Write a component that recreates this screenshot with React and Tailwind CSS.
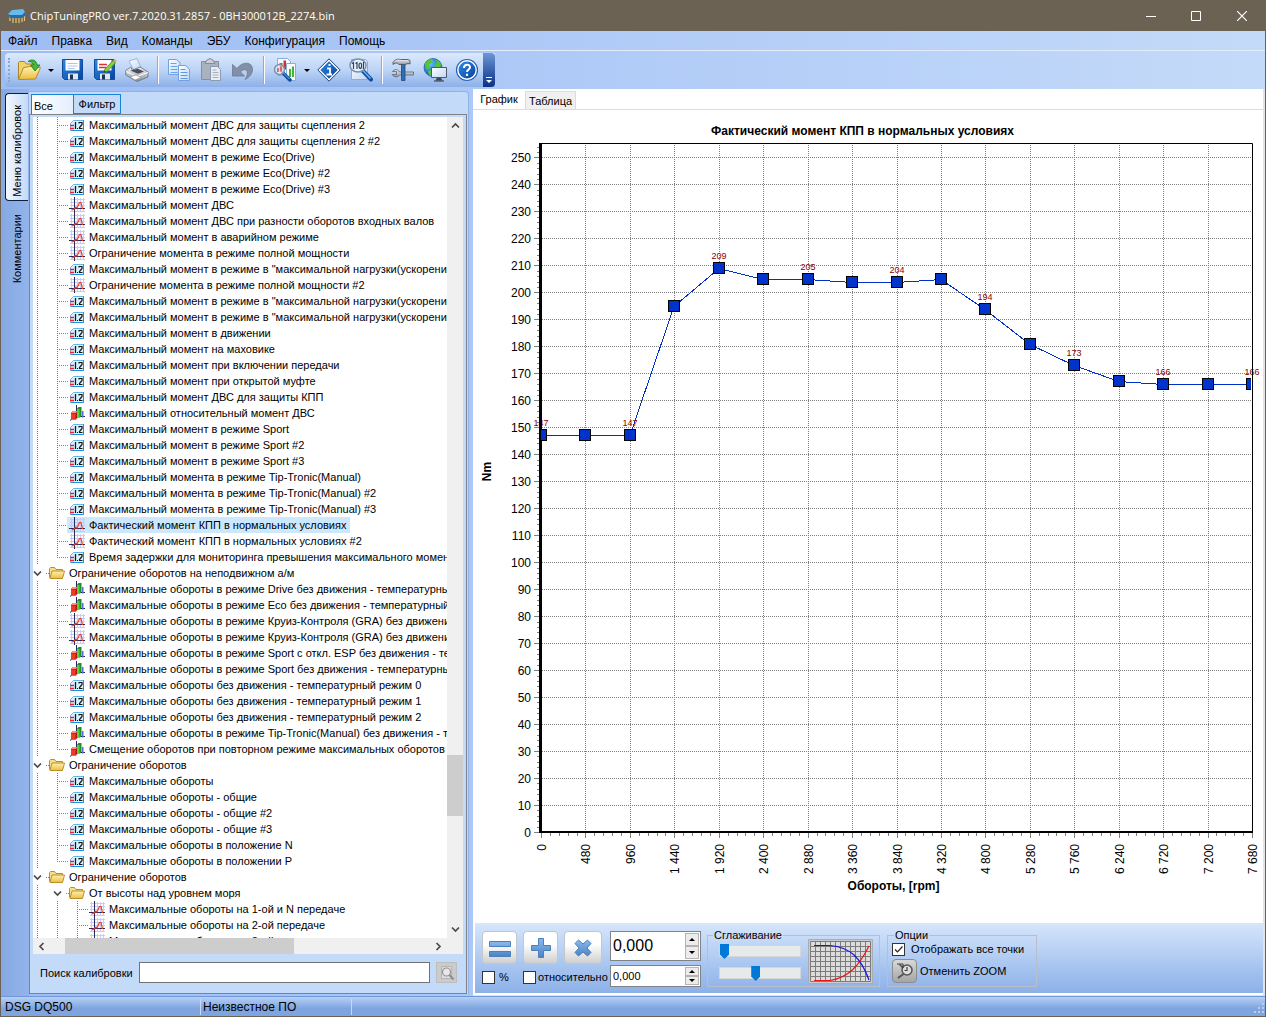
import React, { useLayoutEffect, useRef, useState } from "react";

/* ---------- toolbar icons ---------- */
const Svg = ({ children, size = 24 }) => (
  <svg width={size} height={size} viewBox={`0 0 ${size} ${size}`} fill="none" aria-hidden="true">
    {children}
  </svg>
);

const Defs = () => (
  <svg width="0" height="0" className="absolute" aria-hidden="true">
    <defs>
      <linearGradient id="gold" x1="0" y1="0" x2="0" y2="1">
        <stop offset="0" stopColor="#fdf3b4" />
        <stop offset="1" stopColor="#eebd3c" />
      </linearGradient>
      <linearGradient id="blue" x1="0" y1="0" x2="1" y2="1">
        <stop offset="0" stopColor="#2e8ae6" />
        <stop offset="1" stopColor="#06429a" />
      </linearGradient>
      <linearGradient id="sheet" x1="0" y1="0" x2="1" y2="1">
        <stop offset="0" stopColor="#ffffff" />
        <stop offset="1" stopColor="#bcd7f8" />
      </linearGradient>
      <linearGradient id="steel" x1="0" y1="0" x2="0" y2="1">
        <stop offset="0" stopColor="#f4f6f8" />
        <stop offset="1" stopColor="#8a929d" />
      </linearGradient>
      <linearGradient id="glyph" x1="0" y1="0" x2="0" y2="1">
        <stop offset="0" stopColor="#8cb9ec" />
        <stop offset="1" stopColor="#4a83c4" />
      </linearGradient>
      <radialGradient id="globe" cx="0.35" cy="0.3" r="0.8">
        <stop offset="0" stopColor="#5fc3f5" />
        <stop offset="1" stopColor="#0a4aa5" />
      </radialGradient>
    </defs>
  </svg>
);

const OpenIcon = () => (
  <Svg>
    <path d="M1.5 21.5V4.500l1-1h5l2 2.500h7v4" fill="#f3d368" stroke="#a8832a" />
    <path d="M1.500 21.500 6.500 9.500l7-1 10 1-5 11.500z" fill="url(#gold)" stroke="#b08a2c" />
    <path d="M11 3.500C15 .5 19.500 2 20 7h3l-5 6-4.500-6H16.500C16 4.500 14 3.500 11 3.500z" fill="#45b83c" stroke="#157a1c" strokeWidth=".8" />
  </Svg>
);
const SaveBody = () => (
  <>
    <path d="M1.500 1.500h20v20h-18l-2-2z" fill="url(#blue)" stroke="#0b4ca0" />
    <path d="M4.500 2h14v10.500h-14z" fill="#fff" />
    <path d="M7 15.500h10v6H7z" fill="#dfe7f0" />
    <path d="M9 16.500h3v5H9z" fill="#17345f" />
  </>
);
const SaveIcon = () => (
  <Svg>
    <SaveBody />
    <path d="M6.500 5.500h10M6.500 8h10M6.500 10.500h7" stroke="#a9c8ef" />
  </Svg>
);
const SaveAsIcon = () => (
  <Svg>
    <SaveBody />
    <path d="M6 6.500h8M6 9.500h7" stroke="#d8323c" strokeWidth="1.500" />
    <path d="M11 14.500 12 11 20 2.500l2.500 2.500-8.500 8.500z" fill="#8ccf3d" stroke="#3f8420" strokeWidth=".8" />
    <path d="m20 2.500 1.500-1.800 2.300 2.300-1.300 2z" fill="#f3a53d" />
    <path d="m11 14.500.5-2 1.500 1.500z" fill="#333" />
  </Svg>
);
const PrintIcon = () => (
  <Svg>
    <path d="M4 3 12 .5l4 9-7 3z" fill="url(#sheet)" stroke="#8aa9d6" strokeWidth=".8" />
    <path d="m.8 12.500 5-3.500 1.500 3L15 9l8 5v5l-11 4.500L.8 17z" fill="url(#steel)" stroke="#6f757e" strokeWidth=".9" />
    <path d="m5.500 12.500 7.500 3.300 6-2.300-6-2.800z" fill="#4a4f58" />
    <path d="m1 13.500 11 5 11-4" stroke="#fff" />
    <path d="m5 19 5 3 6-2.500-5-2.500z" fill="#fff" stroke="#8c8c8c" strokeWidth=".6" />
  </Svg>
);
const CopyIcon = () => (
  <Svg>
    <path d="M1.500 1.500h8l3.500 3v12H1.500z" fill="url(#sheet)" stroke="#6fa2df" />
    <path d="M3.500 5.500h6M3.500 8.500h7M3.500 11.500h7M3.500 14.500h7" stroke="#6ca3e6" />
    <path d="M11.500 7.500h7l4 3.500v11.500h-11z" fill="url(#sheet)" stroke="#6fa2df" />
    <path d="M13.500 11.500h5M13.500 14.500h7M13.500 17.500h7M13.500 20.500h7" stroke="#5c97e2" />
  </Svg>
);
const PasteIcon = () => (
  <Svg>
    <path d="M2.500 3.500h17v18h-17z" fill="#a9b3c0" stroke="#8490a0" />
    <path d="M6 5.500 8 2l3-1.500L14 2l2 3.500z" fill="#c9ced6" stroke="#828d9b" />
    <path d="M11.500 8.500h7l3 3v11h-10z" fill="#e8edf3" stroke="#8d9aab" />
    <path d="M13.500 12h4M13.500 14.500h6M13.500 17h6M13.500 19.500h6" stroke="#a5b1c2" />
  </Svg>
);
const UndoIcon = () => (
  <Svg>
    <path d="M1.500 6.500v11.500h12L9.500 14C12 10.500 16.500 11 16.500 15c0 3-1.500 5-2.500 6.500 4-2 7.500-5.500 7.500-10C21.500 3.500 11.500 3 6 10.500z" fill="#8190a6" stroke="#6b7a90" strokeWidth=".8" />
  </Svg>
);
const ChartIcon = () => (
  <Svg>
    <path d="M4.500.5h10l3 3v14h-13z" fill="#f7fbff" stroke="#86aede" />
    <path d="M6.500 5h3v9h-3z" fill="#ef4a2d" />
    <path d="M10.500 2.500h2.500v9h-2.500z" fill="#d63220" />
    <path d="M13.500 5.500h9v17h-9z" fill="#f7fbff" stroke="#86aede" />
    <path d="M16 11h2v8h-2zM19 8.500h2V19h-2z" fill="#41b436" />
    <path d="m10 15 7 7" stroke="#0c4ea1" strokeWidth="3.500" strokeLinecap="round" />
    <path d="m10.500 15 6 6" stroke="#6fb3f2" />
    <circle cx="6.500" cy="11.500" r="5" fill="#dcecfb" fillOpacity=".7" stroke="#7b8ea8" strokeWidth="1.400" />
    <path d="M5 10v4M8 8.500v5" stroke="#c6505a" strokeWidth="1.500" />
  </Svg>
);
const InfoIcon = () => (
  <Svg>
    <path d="M12 .8 23.200 12 12 23.200.8 12z" fill="#fff" stroke="#143f78" />
    <path d="M12 3.300 20.700 12 12 20.700 3.300 12z" fill="url(#blue)" />
    <path d="M10 10.500h3v5.500M9.500 16.500h5.500M11.500 7h2" stroke="#fff" strokeWidth="1.800" />
  </Svg>
);
const BinIcon = () => (
  <Svg>
    <path d="M2.500 1.500h14l2 2v18h-16z" fill="url(#sheet)" stroke="#86aede" />
    <path d="m13 12 9 9.500" stroke="#0c4ea1" strokeWidth="4" strokeLinecap="round" />
    <path d="m13.500 12 8 8.500" stroke="#6fb3f2" strokeWidth="1.500" />
    <ellipse cx="9" cy="7.500" rx="8" ry="6.500" fill="#e8f2fc" fillOpacity=".9" stroke="#7b8ea8" strokeWidth="1.400" />
    <path d="M3 5.500 4.500 4.500V11M6.500 5.500 8 4.500V11M14.500 4v7" stroke="#2d4468" strokeWidth="1.200" />
    <ellipse cx="11.300" cy="7.700" rx="1.300" ry="2.700" stroke="#2d4468" strokeWidth="1.200" />
  </Svg>
);
const ToolsIcon = () => (
  <Svg>
    <path d="M1 16.500c2 3 6 3 7.500.5h14v-3H8.500C7 11 3 11 1.500 13.500h4v3z" fill="url(#steel)" stroke="#5b646f" strokeWidth=".8" />
    <path d="M10.500 6H14v16.500h-3.500z" fill="#2e70b8" stroke="#1d477c" strokeWidth=".8" />
    <path d="M2 4.500C4 1 7 1 9.500 1.500h7.500l2 1V6l-2-.5-3 1H8C6.500 4.500 4.500 4.500 2 6.500z" fill="url(#steel)" stroke="#4f5761" strokeWidth=".9" />
  </Svg>
);
const NetIcon = () => (
  <Svg>
    <circle cx="10" cy="9.500" r="9" fill="url(#globe)" stroke="#0b57a8" strokeWidth=".7" />
    <path d="M2 6C4 2 8 .8 10 1l-1 3.500-3 2 1 3-3 2.500zM13 2c3 .5 5 3 5.500 6l-4 2-3-2.500 2-2zM5 13l4-1 2 3-2 3.500C7 18 5 16 5 13z" fill="#57c433" />
    <path d="M8.500 9.500h15v10h-15z" fill="url(#sheet)" stroke="#4d5a69" />
    <path d="M14 20h4l1.500 2.500h-7z" fill="#3d4651" />
    <path d="M11 23h10" stroke="#2f3740" />
  </Svg>
);
const HelpIcon = () => (
  <Svg>
    <circle cx="12" cy="12" r="10.500" fill="#fff" stroke="#2563b5" strokeWidth="1.200" />
    <circle cx="12" cy="12" r="8.500" fill="url(#blue)" />
    <path d="M9 10c0-4.300 6-4.300 6-.8 0 2.300-3 2.200-3 4.800" stroke="#fff" strokeWidth="2" />
    <path d="M10.900 15.700h2.200v2.200h-2.200z" fill="#fff" />
  </Svg>
);

/* ---------- tree icons ---------- */
const NumIcon = () => (
  <Svg size={16}>
    <path d="M4.500 3.500h10v10h-13v-7z" fill="#d9f2ff" stroke="#62b6ee" />
    <path d="M14.500 3v10.500H2" stroke="#1f8fe0" />
    <path d="M1 8.500h4M1 11.500h4" stroke="#f0202c" strokeWidth="1.400" />
    <path d="M6.500 5v7" stroke="#15161c" strokeWidth="1.300" />
    <path d="M8 11h1v1H8z" fill="#15161c" />
    <path d="M10 6.500v-1h3v2l-2.500 3v1H13.500" stroke="#15161c" strokeWidth="1.200" />
  </Svg>
);
const CurveIcon = () => (
  <Svg size={16}>
    <path d="M2.500 1v14M8.500 1v14M11.500 1v14M14.500 1v14M1 2.500h15M1 5.500h15M1 8.500h15M1 14.500h15" stroke="#c9caf8" />
    <path d="M5.500 0v16M0 11.500h16" stroke="#2a2a62" />
    <path d="m3 13 2-1 2-2 1 1 2.500-5.500h1.500L13.500 12" stroke="#f04024" strokeWidth="1.200" />
  </Svg>
);
const BarIcon = () => (
  <Svg size={16}>
    <path d="M7.500 0v12M1 15.500l5-4M7 11.500h9" stroke="#2a2a62" />
    <path d="m2 8 2-2h5v6l-2 2.500H2z" fill="#b41712" />
    <path d="M2 8.500h4.500v6H2z" fill="#ee3b28" />
    <path d="m2.300 8 1.700-2h4.500L7 8z" fill="#ff8d74" />
    <path d="M8 3.500 9.500 2h3v9L11 12.500H8z" fill="#1d8f23" />
    <path d="M8 4h2.500v8.500H8z" fill="#4bd640" />
    <path d="M13 6h1.500v6.500H13z" fill="#5b66d9" />
  </Svg>
);
const FolderIcon = () => (
  <Svg size={16}>
    <path d="M.5 12.500v-9l1-1h4l1.500 2h6.500v2" fill="#f8e08a" stroke="#b98f2d" />
    <path d="m1 13.500 2-7.500h12.500l-2 7.500z" fill="url(#gold)" stroke="#b98f2d" />
  </Svg>
);
const icons = { n: NumIcon, c: CurveIcon, b: BarIcon };

/* [depth, kind, label, last-in-branch] ; kind f = folder */
const U = 'Максимальный момент в режиме в "максимальной нагрузки(ускорения';
const rows = [
  [2, "n", "Максимальный момент ДВС для защиты сцепления 2"],
  [2, "n", "Максимальный момент ДВС для защиты сцепления 2 #2"],
  [2, "n", "Максимальный момент в режиме Eco(Drive)"],
  [2, "n", "Максимальный момент в режиме Eco(Drive) #2"],
  [2, "n", "Максимальный момент в режиме Eco(Drive) #3"],
  [2, "c", "Максимальный момент ДВС"],
  [2, "c", "Максимальный момент ДВС при разности оборотов входных валов"],
  [2, "c", "Максимальный момент в аварийном режиме"],
  [2, "c", "Ограничение момента в режиме полной мощности"],
  [2, "n", U],
  [2, "c", "Ограничение момента в режиме полной мощности #2"],
  [2, "n", U],
  [2, "n", U],
  [2, "n", "Максимальный момент в движении"],
  [2, "n", "Максимальный момент на маховике"],
  [2, "n", "Максимальный момент при включении передачи"],
  [2, "n", "Максимальный момент при открытой муфте"],
  [2, "n", "Максимальный момент ДВС для защиты КПП"],
  [2, "b", "Максимальный относительный момент ДВС"],
  [2, "n", "Максимальный момент в режиме Sport"],
  [2, "n", "Максимальный момент в режиме Sport #2"],
  [2, "n", "Максимальный момент в режиме Sport #3"],
  [2, "n", "Максимальный момента в режиме Tip-Tronic(Manual)"],
  [2, "n", "Максимальный момента в режиме Tip-Tronic(Manual) #2"],
  [2, "n", "Максимальный момента в режиме Tip-Tronic(Manual) #3"],
  [2, "c", "Фактический момент КПП в нормальных условиях"],
  [2, "c", "Фактический момент КПП в нормальных условиях #2"],
  [2, "n", "Время задержки для мониторинга превышения максимального момент", true],
  [1, "f", "Ограничение оборотов на неподвижном а/м"],
  [2, "b", "Максимальные обороты в режиме Drive без движения - температурны"],
  [2, "b", "Максимальные обороты в режиме Eco без движения - температурный"],
  [2, "c", "Максимальные обороты в режиме Круиз-Контроля (GRA) без движени"],
  [2, "c", "Максимальные обороты в режиме Круиз-Контроля (GRA) без движени"],
  [2, "b", "Максимальные обороты в режиме Sport с откл. ESP без движения - те"],
  [2, "b", "Максимальные обороты в режиме Sport без движения - температурны"],
  [2, "n", "Максимальные обороты без движения - температурный режим 0"],
  [2, "n", "Максимальные обороты без движения - температурный режим 1"],
  [2, "n", "Максимальные обороты без движения - температурный режим 2"],
  [2, "b", "Максимальные обороты в режиме Tip-Tronic(Manual) без движения - те"],
  [2, "b", "Смещение оборотов при повторном режиме максимальных оборотов б", true],
  [1, "f", "Ограничение оборотов"],
  [2, "n", "Максимальные обороты"],
  [2, "n", "Максимальные обороты - общие"],
  [2, "n", "Максимальные обороты - общие #2"],
  [2, "n", "Максимальные обороты - общие #3"],
  [2, "n", "Максимальные обороты в положение N"],
  [2, "n", "Максимальные обороты в положении P", true],
  [1, "f", "Ограничение оборотов"],
  [2, "f", "От высоты над уровнем моря"],
  [3, "c", "Максимальные обороты на 1-ой и N передаче"],
  [3, "c", "Максимальные обороты на 2-ой передаче"],
  [3, "c", "Максимальные обороты на 3-ей передаче"],
];

const Chevron = ({ className }) => (
  <svg viewBox="0 0 9 9" width="9" height="9" fill="none" className={className} aria-hidden="true">
    <path d="m1 2.500 3.500 3.500L8 2.500" stroke="#4a4a4a" strokeWidth="1.700" />
  </svg>
);

function Guide({ last, elbow }) {
  return (
    <svg width={elbow ? 16 : 20} height="16" className="shrink-0" aria-hidden="true">
      <path d={last ? "M4.500 0v9" : "M4.500 0v16"} stroke="#808080" strokeDasharray="1 1" />
      {elbow && <path d="M4 8.500h12" stroke="#808080" strokeDasharray="1 1" />}
    </svg>
  );
}

function TreeRow({ row, selected, onSelect }) {
  const [depth, kind, label, last] = row;
  const folder = kind === "f";
  const Icon = folder ? FolderIcon : icons[kind];
  return (
    <li role="treeitem" aria-selected={selected} onClick={onSelect} className="flex h-4 items-center whitespace-nowrap">
      {Array.from({ length: depth - 1 }, (_, i) => (
        <Guide key={i} />
      ))}
      {folder ? (
        <button type="button" aria-label={"Свернуть " + label} className="flex h-4 w-4 shrink-0 items-center">
          <Chevron />
          <span className="ml-1 w-[3px] border-t border-dotted border-[#808080]" />
        </button>
      ) : (
        <Guide elbow last={last} />
      )}
      <span className={"-ml-0.5 flex h-4 items-center gap-1 pr-1 pl-0.5 " + (selected ? "bg-[#cce8ff]" : "")}>
        <span className="h-4 w-4 shrink-0">
          <Icon />
        </span>
        {label}
      </span>
    </li>
  );
}

/* ---------- chart ---------- */
const values = [147, 147, 147, 195, 209, 205, 205, 204, 204, 205, 194, 181, 173, 167, 166, 166, 166];
const fmt = (n) => (n >= 1000 ? `${Math.floor(n / 1000)} ${String(n % 1000).padStart(3, "0")}` : String(n));

function Chart() {
  const ref = useRef(null);
  const [size, setSize] = useState({ w: 788, h: 813 });
  useLayoutEffect(() => {
    const el = ref.current;
    const measure = () => setSize({ w: el.clientWidth, h: el.clientHeight });
    measure();
    const ro = new ResizeObserver(measure);
    ro.observe(el);
    return () => ro.disconnect();
  }, []);
  const { w, h } = size;
  const L = 68;
  const R = w - 11;
  const T = 33;
  const B = h - 91;
  const px = (i) => Math.round(L + ((R - L) * i) / 16);
  const py = (v) => Math.round(B - ((B - T - 1) * v) / 255);
  const minorX = Array.from({ length: 80 }, (_, i) => Math.round(L + ((R - L) * i) / 80));
  const minorY = Array.from({ length: 128 }, (_, i) => py(i * 2));
  return (
    <div ref={ref} className="min-h-0 flex-1 overflow-hidden">
      <svg width={w} height={h} className="block text-xs" role="img" aria-label="Фактический момент КПП в нормальных условиях">
        <clipPath id="plot">
          <rect x={L} y={T} width={R - L - 1} height={B - T} />
        </clipPath>
        <text x={(L + R) / 2 - 34} y={T - 8} textAnchor="middle" className="font-bold">
          Фактический момент КПП в нормальных условиях
        </text>
        {Array.from({ length: 26 }, (_, i) => (
          <g key={i}>
            {i > 0 && <path d={`M${L + 1} ${py(i * 10) + 0.5}H${R}`} stroke="#808080" strokeDasharray="1 1" />}
            <path d={`M${L - 7} ${py(i * 10) + 0.5}h5`} stroke="#808080" />
            <text x={L - 10} y={py(i * 10) + 5} textAnchor="end">
              {i * 10}
            </text>
          </g>
        ))}
        {minorY.map((y, i) => (
          <path key={i} d={`M${L - 4} ${y + 0.5}h3`} stroke="#808080" />
        ))}
        {minorX.map((x, i) => (
          <path key={i} d={`M${x + 0.5} ${B + 1}v3`} stroke="#808080" />
        ))}
        {values.map((_, i) => (
          <g key={i}>
            {i > 0 && i < 16 && <path d={`M${px(i) + 0.5} ${T}V${B}`} stroke="#808080" strokeDasharray="1 1" />}
            <path d={`M${px(i) + 0.5} ${B + 1}v5`} stroke="#808080" />
            <text transform={`translate(${px(i) + 5} ${B + 12}) rotate(-90)`} textAnchor="end">
              {fmt(i * 480)}
            </text>
          </g>
        ))}
        <g className="text-[9px]" fill="#8b0000">
          {values.map((v, i) =>
            i % 2 === 0 ? (
              <text key={i} x={px(i)} y={py(v) - 9} textAnchor="middle">
                {v}
              </text>
            ) : null
          )}
        </g>
        <path d={`M${L - 2} ${T + 0.5}H${R + 0.5}V${B}`} stroke="#000" fill="none" />
        <path d={`M${L - 0.5} ${T}V${B + 1}`} stroke="#000" strokeWidth="3" />
        <path d={`M${L - 2} ${B}H${R + 1}`} stroke="#000" strokeWidth="2" />
        <g clipPath="url(#plot)">
          <polyline points={values.map((v, i) => `${px(i)},${py(v) + 0.5}`).join(" ")} fill="none" stroke="#0030c8" shapeRendering="crispEdges" />
          {values.map((v, i) => (
            <rect key={i} x={px(i) - 5.5} y={py(v) - 5.5} width="11" height="11" fill="#0032cc" stroke="#000" />
          ))}
        </g>
        <text x={(L + R) / 2 - 3} y={B + 58} textAnchor="middle" className="font-bold">
          Обороты, [rpm]
        </text>
        <text transform={`translate(18 ${(T + B) / 2 - 16}) rotate(-90)`} textAnchor="middle" className="font-bold">
          Nm
        </text>
      </svg>
    </div>
  );
}

/* ---------- small controls ---------- */
const Tool = ({ label, children }) => (
  <button type="button" aria-label={label} title={label} className="flex h-8 w-8 shrink-0 items-center justify-center">
    {children}
  </button>
);
const Drop = ({ label }) => (
  <button type="button" aria-label={label} className="flex h-8 w-3 shrink-0 items-center justify-center">
    <span className="border-x-[3px] border-t-[3px] border-x-transparent border-t-black" />
  </button>
);
const Sep = () => <span className="mx-1 h-7 w-0.5 shrink-0 border-r border-l border-r-white border-l-[#8fa9cf]" />;

function Spin({ label, big }) {
  const [value, setValue] = useState("0,000");
  const b = "flex flex-1 items-center justify-center border border-[#b4b4b4] bg-[#ececec]";
  const step = (d) => setValue((s) => (parseFloat(s.replace(",", ".")) + d).toFixed(3).replace(".", ","));
  return (
    <div className={"flex w-[91px] border border-[#7f8287] bg-white p-px " + (big ? "h-[30px]" : "h-[22px]")}>
      <input
        aria-label={label}
        value={value}
        onChange={(e) => setValue(e.target.value)}
        className={"min-w-0 flex-1 bg-transparent pl-px outline-none " + (big ? "text-base" : "text-[11px]")}
      />
      <div className="flex w-[14px] flex-col">
        <button type="button" aria-label="Больше" className={b} onClick={() => step(1)}>
          <span className="border-x-[3px] border-b-[3px] border-x-transparent border-b-black" />
        </button>
        <button type="button" aria-label="Меньше" className={b} onClick={() => step(-1)}>
          <span className="border-x-[3px] border-t-[3px] border-x-transparent border-t-black" />
        </button>
      </div>
    </div>
  );
}

function Check({ children, defaultChecked, gap }) {
  return (
    <label className={"flex items-center whitespace-nowrap " + gap}>
      <span className="relative h-[13px] w-[13px]">
        <input type="checkbox" defaultChecked={defaultChecked} className="peer block h-[13px] w-[13px] appearance-none border border-[#333] bg-white" />
        <svg viewBox="0 0 13 13" className="pointer-events-none absolute inset-0 hidden peer-checked:block" fill="none" aria-hidden="true">
          <path d="m3 6.500 2.500 2.500 5-5.500" stroke="#222" strokeWidth="1.200" />
        </svg>
      </span>
      {children}
    </label>
  );
}

const Slider = ({ label, value }) => (
  <input
    type="range"
    aria-label={label}
    defaultValue={value}
    className="block h-4 w-[82px] appearance-none bg-transparent [&::-webkit-slider-runnable-track]:h-3 [&::-webkit-slider-runnable-track]:border [&::-webkit-slider-runnable-track]:border-[#d6d6d6] [&::-webkit-slider-runnable-track]:bg-[#e7eaea] [&::-webkit-slider-thumb]:-mt-0.5 [&::-webkit-slider-thumb]:h-[15px] [&::-webkit-slider-thumb]:w-[9px] [&::-webkit-slider-thumb]:appearance-none [&::-webkit-slider-thumb]:bg-[#0078d7] [&::-webkit-slider-thumb]:[clip-path:polygon(0_0,100%_0,100%_70%,50%_100%,0_70%)]"
  />
);

const OpButton = ({ label, wide, children }) => (
  <button
    type="button"
    aria-label={label}
    className={"flex h-[33px] items-center justify-center rounded-sm border border-[#c3c7cd] bg-linear-to-b from-white from-40% to-[#cfcfcf] " + (wide ? "w-[38px]" : "w-[35px]")}
  >
    {children}
  </button>
);

const menu = ["Файл", "Правка", "Вид", "Команды", "ЭБУ", "Конфигурация", "Помощь"];

export default function App() {
  const [selected, setSelected] = useState(25);
  return (
    <div className="flex h-screen w-full flex-col overflow-hidden border border-t-0 border-[#6b6253] bg-linear-to-r from-[#9ebdf5] to-[#c4daf9] font-['Liberation_Sans',sans-serif] text-[11px] leading-4 text-black">
      <Defs />
      <header className="flex h-[31px] shrink-0 items-center bg-[#6b6253] text-white">
        <svg width="18" height="16" viewBox="0 0 18 16" className="ml-[7px]" aria-hidden="true">
          <path d="M2 8v5M5 10v5M8 10v5M11 10v5M14 9v5M16.500 6v7" stroke="#e8c46a" strokeWidth="1.200" />
          <path d="M0 6 4 2l11-1 2 3v4l-3 2H2z" fill="#1f6db5" />
          <path d="m0 6 4-4 11-1 2 3-3 3H2z" fill="#68b9ee" />
        </svg>
        <h1 className="ml-1 flex-1 font-['Open_Sans',sans-serif] text-[11px]">ChipTuningPRO ver.7.2020.31.2857 - 0BH300012B_2274.bin</h1>
        <button type="button" aria-label="Свернуть" className="flex h-full w-[45px] items-center justify-center">
          <svg width="10" height="10"><path d="M0 5.500h10" stroke="#fff" /></svg>
        </button>
        <button type="button" aria-label="Развернуть" className="flex h-full w-[45px] items-center justify-center">
          <svg width="10" height="10"><path d="M.5.500h9v9h-9z" stroke="#fff" fill="none" /></svg>
        </button>
        <button type="button" aria-label="Закрыть" className="flex h-full w-[47px] items-center justify-center">
          <svg width="10" height="10"><path d="m0 0 10 10M10 0 0 10" stroke="#fff" strokeWidth="1.200" /></svg>
        </button>
      </header>

      <nav className="flex h-5 shrink-0 items-center gap-[14px] border-b border-[#e4ecf8] pl-[7px] text-xs">
        {menu.map((m) => (
          <button type="button" key={m}>{m}</button>
        ))}
      </nav>

      <div className="flex h-[38px] shrink-0 items-start pt-0.5 pl-1" role="toolbar">
        <div className="flex h-[34px] items-center rounded-l bg-linear-to-b from-[#dbe9fc] via-[#bdd4f6] to-[#8db0e8] pl-[3px]">
          <span className="mr-[3px] h-6 border-l-2 border-dotted border-[#8ba6cf]" />
          <Tool label="Открыть"><OpenIcon /></Tool>
          <Drop label="Недавние файлы" />
          <Tool label="Сохранить"><SaveIcon /></Tool>
          <Tool label="Сохранить как"><SaveAsIcon /></Tool>
          <Tool label="Печать"><PrintIcon /></Tool>
          <Sep />
          <Tool label="Копировать"><CopyIcon /></Tool>
          <Tool label="Вставить"><PasteIcon /></Tool>
          <Tool label="Отменить"><UndoIcon /></Tool>
          <Sep />
          <Tool label="Графики"><ChartIcon /></Tool>
          <Drop label="Виды графиков" />
          <Tool label="Информация"><InfoIcon /></Tool>
          <Tool label="Поиск"><BinIcon /></Tool>
          <Sep />
          <Tool label="Настройки"><ToolsIcon /></Tool>
          <Tool label="Сеть"><NetIcon /></Tool>
          <Tool label="Справка"><HelpIcon /></Tool>
          <button type="button" aria-label="Параметры панели" className="flex h-[34px] w-3 flex-col items-center justify-end rounded-r-sm bg-linear-to-b from-[#6f96d8] to-[#0b2f85] pb-1">
            <span className="mb-0.5 w-1.5 border-t border-white" />
            <span className="border-x-[3px] border-t-[3px] border-x-transparent border-t-white" />
          </button>
        </div>
      </div>

      <main className="flex min-h-0 flex-1">
        <section className="flex w-[472px] shrink-0 pr-1">
          <div className="flex w-7 shrink-0 flex-col items-end bg-linear-to-r from-[#86a9e2] to-[#93b4ea] pt-1 pr-px" role="tablist" aria-label="Панели">
            <button type="button" role="tab" aria-selected="true" className="flex h-[108px] w-[23px] items-center justify-center rounded-l border border-r-0 border-[#0b1f44] bg-linear-to-r from-[#f3f8ff] to-[#c4daf9] pt-2">
              <span className="rotate-180 [writing-mode:vertical-rl]">Меню калибровок</span>
            </button>
            <button type="button" role="tab" aria-selected="false" className="flex h-[96px] w-[23px] items-center justify-center">
              <span className="rotate-180 [writing-mode:vertical-rl]">Комментарии</span>
            </button>
          </div>
          <div className="mt-0.5 mb-0.5 flex min-w-0 flex-1 flex-col rounded-tr border-t border-r border-[#8fb1e8] bg-[#c4daf9] pt-0.5 pr-px">
            <div className="flex pl-0.5" role="tablist" aria-label="Калибровки">
              <button type="button" role="tab" aria-selected="true" className="h-5 w-[43px] border border-b-0 border-[#1883d7] bg-linear-to-r from-white to-[#e4effc] pt-0.5 pl-0.5 text-left">Все</button>
              <button type="button" role="tab" aria-selected="false" className="-ml-px h-5 w-[48px] border border-[#1883d7] text-center">Фильтр</button>
            </div>
            <div className="flex min-h-0 flex-1 flex-col border border-[#7f8287] bg-[#c4daf9] px-[3px] pt-0.5">
              <div className="flex min-h-0 flex-1">
                <ul role="tree" className="min-w-0 flex-1 overflow-hidden bg-white">
                  {rows.map((r, i) => (
                    <TreeRow key={i} row={r} selected={i === selected} onSelect={() => setSelected(i)} />
                  ))}
                </ul>
                <div className="flex w-4 shrink-0 flex-col items-center bg-[#f0f0f0]">
                  <button type="button" aria-label="Вверх" className="flex h-[17px] w-full items-center justify-center"><Chevron className="rotate-180" /></button>
                  <div className="grow-[621]" />
                  <div className="h-[61px] w-full bg-[#cdcdcd]" />
                  <div className="grow-[105]" />
                  <button type="button" aria-label="Вниз" className="flex h-[17px] w-full items-center justify-center"><Chevron /></button>
                </div>
              </div>
              <div className="flex h-4 shrink-0 items-center bg-[#f0f0f0]">
                <button type="button" aria-label="Влево" className="flex h-full w-4 items-center justify-center"><Chevron className="rotate-90" /></button>
                <div className="ml-4 h-full w-[229px] bg-[#cdcdcd]" />
                <button type="button" aria-label="Вправо" className="mr-[17px] ml-auto flex h-full w-4 items-center justify-center"><Chevron className="-rotate-90" /></button>
              </div>
              <div className="flex h-[39px] shrink-0 items-center pb-0.5 pl-[7px]">
                <label htmlFor="search" className="w-[99px] whitespace-nowrap">Поиск калибровки</label>
                <input id="search" className="h-[21px] min-w-0 flex-1 border border-[#6f7277] bg-white px-1 outline-none" />
                <button type="button" aria-label="Найти" className="mr-1.5 ml-1.5 flex h-[21px] w-[21px] items-center justify-center border border-[#bdbdbd] bg-[#cbcbcb]">
                  <svg width="16" height="16" viewBox="0 0 16 16" fill="none" aria-hidden="true">
                    <path d="M2.500 1.500h10v12h-10z" fill="#dedede" stroke="#b5b5b5" />
                    <circle cx="7.500" cy="7" r="4" fill="#e8e8e8" stroke="#949494" strokeWidth="1.200" />
                    <path d="m10.500 10 4 4.500" stroke="#8c8c8c" strokeWidth="2" />
                  </svg>
                </button>
              </div>
            </div>
          </div>
        </section>

        <section className="flex min-w-0 flex-1 flex-col border-r-2 border-b border-[#e3e3e3] bg-white">
          <div className="flex h-[21px] shrink-0 items-end border-b border-[#dcdcdc]" role="tablist" aria-label="Вид данных">
            <button type="button" role="tab" aria-selected="true" className="h-full w-[52px] text-center">График</button>
            <button type="button" role="tab" aria-selected="false" className="h-[18px] w-[51px] border border-b-0 border-[#dcdcdc] bg-[#f0f0f0] text-center">Таблица</button>
          </div>
          <Chart />
          <div className="mb-0.5 ml-0.5 flex h-[70px] shrink-0 items-start bg-linear-to-b from-[#d6e6fb] to-[#8cb0e8] pt-2 pl-[7px]">
            <div className="mr-0.5 flex w-[126px] flex-col gap-[5px]">
              <div className="flex gap-1.5">
                <OpButton label="Присвоить">
                  <svg width="24" height="20" fill="url(#glyph)" stroke="#4a80bf" aria-hidden="true"><path d="M1.500 3.500h21v5h-21zM1.500 13.500h21v5h-21z" /></svg>
                </OpButton>
                <OpButton label="Прибавить">
                  <svg width="20" height="20" fill="url(#glyph)" stroke="#4a80bf" aria-hidden="true"><path d="M7.500.5h5v7h7v5h-7v7h-5v-7h-7v-5h7z" /></svg>
                </OpButton>
                <OpButton label="Умножить" wide>
                  <svg width="20" height="20" fill="url(#glyph)" stroke="#4a80bf" aria-hidden="true"><path d="m5.500 2 4.500 4 4.500-4L18 5.500l-4 4.500 4 4.500-3.500 3.500-4.500-4-4.500 4L2 14.500 6 10 2 5.500z" /></svg>
                </OpButton>
              </div>
              <div className="flex h-4">
                <div className="w-[41px]"><Check gap="gap-1">%</Check></div>
                <Check gap="gap-0.5">относительно</Check>
              </div>
            </div>
            <div className="mr-1.5 flex flex-col gap-1">
              <Spin label="Значение" big />
              <Spin label="Относительное значение" />
            </div>
            <fieldset className="-mt-1 mr-[7px] h-[60px] w-[173px] border border-[#b9bfc9] pl-[11px]">
              <legend className="-ml-1.5 px-px leading-4">Сглаживание</legend>
              <div className="-mt-1 flex gap-[7px]">
                <div className="flex flex-col gap-1.5 pt-1">
                  <Slider label="Сглаживание по X" value={0} />
                  <Slider label="Сглаживание по Y" value={44} />
                </div>
                <svg width="65" height="45" viewBox="0 0 65 45" fill="none" aria-hidden="true">
                  <path d="M.5.500h64v44H.5z" fill="#c9cbce" stroke="#a9adb3" />
                  <path d="M2.500 2.500h60v40h-60zM7.500 2v41M12.500 2v41M17.500 2v41M22.500 2v41M27.500 2v41M32.500 2v41M37.500 2v41M42.500 2v41M47.500 2v41M52.500 2v41M57.500 2v41M2 7.500h61M2 12.500h61M2 17.500h61M2 22.500h61M2 27.500h61M2 32.500h61M2 37.500h61" stroke="#7b7b7b" fill="#dcdcdc" />
                  <path d="M6 41.500h16C40 39 51 27 61 7" stroke="#f01414" strokeWidth="1.200" />
                  <path d="M6 6.500h16C42 8 53 19 61 41" stroke="#1414e6" strokeWidth="1.200" />
                </svg>
              </div>
            </fieldset>
            <fieldset className="-mt-1 h-[60px] w-[150px] border border-[#b9bfc9] pl-1">
              <legend className="ml-0.5 px-px leading-4">Опции</legend>
              <div className="-mt-0.5 flex flex-col gap-0.5">
                <Check defaultChecked gap="gap-1.5">Отображать все точки</Check>
                <button type="button" className="flex items-center gap-[3px] whitespace-nowrap">
                  <span className="flex h-6 w-[25px] items-center justify-center rounded-sm border border-[#8d8d8d] bg-linear-to-b from-[#d9d9d9] to-[#a5a5a5]">
                    <svg width="18" height="18" viewBox="0 0 18 18" fill="none" aria-hidden="true">
                      <circle cx="11" cy="8" r="5" fill="#dcdcdc" stroke="#555" strokeWidth="1.500" />
                      <path d="M7.500 12 2 16" stroke="#555" strokeWidth="2" />
                      <path d="M11 5v3.500H8.500M1 2h6M7 2v4M7 6 3.500 2.500" stroke="#444" strokeWidth="1.200" />
                    </svg>
                  </span>
                  Отменить ZOOM
                </button>
              </div>
            </fieldset>
          </div>
        </section>
      </main>

      <footer className="flex h-5 shrink-0 items-center border-t border-[#6f98dc] bg-linear-to-b from-[#b7d0f6] to-[#7ea5df] to-60% text-xs">
        <span className="w-[200px] border-r border-[#c5dafa] pl-1">DSG DQ500</span>
        <span className="w-[151px] border-r border-[#c5dafa] pl-0.5">Неизвестное ПО</span>
        <svg width="12" height="12" className="mt-1 ml-auto" aria-hidden="true">
          <path d="M9 1h2M9 5h2M9 9h2M5 5h2M5 9h2M1 9h2" stroke="#b5cdf2" strokeWidth="2" />
        </svg>
      </footer>
    </div>
  );
}
